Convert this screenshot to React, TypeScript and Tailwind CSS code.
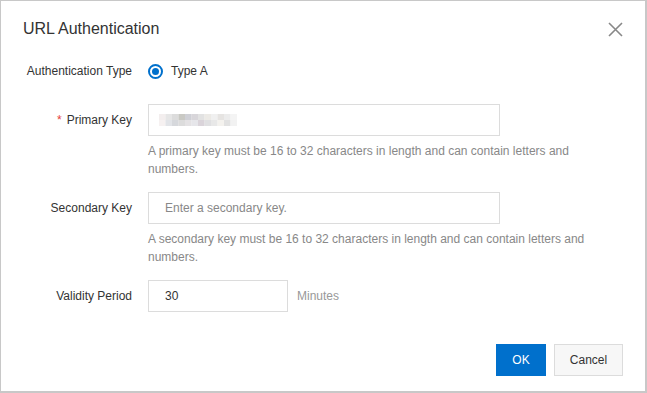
import React, { useState } from 'react';

const mosaic = [
  ['#f3eeee', '#e6e6e6', '#dcdcdc', '#c9c9c4', '#cfd0d6', '#d8d6da', '#e2e2e2', '#eceae6', '#f0f0f0', '#e6e4e2', '#ececec', '#f4f4f4'],
  ['#f6f1f1', '#e2e4e8', '#d6d8dc', '#dcdcdc', '#e4e2e4', '#e6e6ea', '#dad4da', '#e0e0e2', '#e8e8e8', '#f4f2ee', '#e2e2e2', '#f2f2f2'],
];

function Mosaic() {
  return (
    <svg width="78" height="12" viewBox="0 0 78 12" className="block">
      {mosaic.map((row, r) =>
        row.map((c, i) => <rect key={`${r}-${i}`} x={i * 6.5} y={r * 6} width="6.6" height="6.1" fill={c} />)
      )}
    </svg>
  );
}

function FormRow({ label, required, children, className = '' }: { label: string; required?: boolean; children: React.ReactNode; className?: string }) {
  return (
    <div className={`flex ${className}`}>
      <div className="w-[147px] shrink-0 pr-[16px] h-[32px] flex items-center justify-end text-[12px] text-[#333]">
        {required && <span className="text-[#e5413a] mr-[5px]">*</span>}
        {label}
      </div>
      <div className="flex-1 min-w-0">{children}</div>
    </div>
  );
}

function Help({ lines }: { lines: string[] }) {
  return (
    <div className="mt-[6px] text-[12px] leading-[18px] text-[#888]">
      {lines.map((l) => (
        <div key={l} className="whitespace-nowrap">{l}</div>
      ))}
    </div>
  );
}

function App() {
  const [secondary, setSecondary] = useState('');
  const [validity, setValidity] = useState('30');

  return (
    <div className="w-[647px] h-[393px] bg-white border-t border-l border-r-2 border-b-2 border-[#c8c8c8] font-['Liberation_Sans',Arial,sans-serif] flex flex-col">
      {/* Header */}
      <div className="h-[54px] flex items-start justify-between pl-[22px] pr-[22px] pt-[16px]">
        <h2 className="text-[16px] leading-[24px] text-[#333]">URL Authentication</h2>
        <button className="mt-[5px] text-[#888]" aria-label="Close">
          <svg width="15" height="15" viewBox="0 0 15 15" fill="none" stroke="currentColor" strokeWidth="1.6">
            <path d="M1 1 L14 14 M14 1 L1 14" />
          </svg>
        </button>
      </div>

      {/* Body */}
      <div className="flex flex-col">
        <FormRow label="Authentication Type">
          <label className="h-[32px] flex items-center gap-[8px] text-[12px] text-[#333]">
            <span className="w-[15px] h-[15px] rounded-full border-2 border-[#0070cc] flex items-center justify-center">
              <span className="w-[7px] h-[7px] rounded-full bg-[#0070cc]" />
            </span>
            Type A
          </label>
        </FormRow>

        <FormRow label="Primary Key" required className="mt-[17px]">
          <div className="w-[352px] h-[32px] border border-[#dcdcdc] flex items-center pl-[10px]">
            <Mosaic />
          </div>
          <Help lines={['A primary key must be 16 to 32 characters in length and can contain letters and', 'numbers.']} />
        </FormRow>

        <FormRow label="Secondary Key" className="mt-[14px]">
          <input
            value={secondary}
            onChange={(e) => setSecondary(e.target.value)}
            placeholder="Enter a secondary key."
            className="w-[352px] h-[32px] border border-[#dcdcdc] px-[16px] text-[12px] text-[#333] placeholder:text-[#888] outline-none"
          />
          <Help lines={['A secondary key must be 16 to 32 characters in length and can contain letters and', 'numbers.']} />
        </FormRow>

        <FormRow label="Validity Period" className="mt-[14px]">
          <div className="flex items-center">
            <input
              value={validity}
              onChange={(e) => setValidity(e.target.value)}
              className="w-[140px] h-[32px] border border-[#dcdcdc] px-[16px] text-[12px] text-[#333] outline-none"
            />
            <span className="ml-[9px] text-[12px] text-[#999]">Minutes</span>
          </div>
        </FormRow>
      </div>

      {/* Footer */}
      <div className="mt-[32px] flex justify-end gap-[8px] pr-[22px]">
        <button className="w-[50px] h-[32px] bg-[#0070cc] text-white text-[12px]">OK</button>
        <button className="w-[69px] h-[32px] bg-[#f7f7f7] border border-[#dcdcdc] text-[#333] text-[12px]">Cancel</button>
      </div>
    </div>
  );
}

export default App;
